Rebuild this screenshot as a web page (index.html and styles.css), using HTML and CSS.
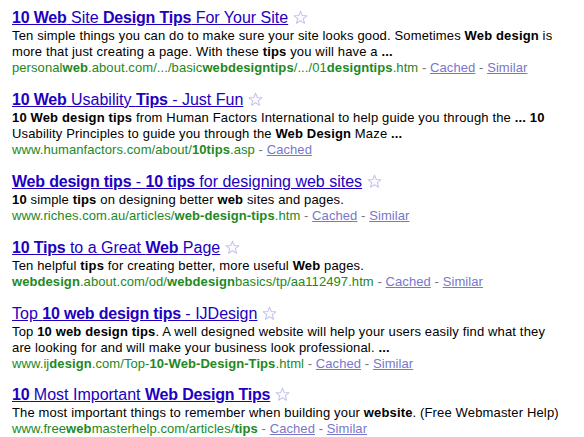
FILE: index.html
```html
<!DOCTYPE html>
<html>
<head>
<meta charset="utf-8">
<link rel="stylesheet" href="styles.css">
</head>
<body>
<ol class="results">
  <li class="result">
    <h3 class="title"><a href="#"><b>10 Web</b> Site <b>Design Tips</b> For Your Site</a><svg class="star" viewBox="0 0 16 16"><path d="M8 1.2 L9.9 5.9 L14.8 6.2 L11 9.3 L12.3 14.2 L8 11.5 L3.7 14.2 L5 9.3 L1.2 6.2 L6.1 5.9 Z"/></svg></h3>
    <div class="snippet">Ten simple things you can do to make sure your site looks good. Sometimes <b>Web design</b> is<br>more that just creating a page. With these <b>tips</b> you will have a <b>...</b></div>
    <div class="meta"><cite>personal<b>web</b>.about.com/.../basic<b>webdesigntips</b>/.../01<b>designtips</b>.htm</cite> - <a href="#">Cached</a> - <a href="#">Similar</a></div>
  </li>
  <li class="result">
    <h3 class="title"><a href="#"><b>10 Web</b> Usability <b>Tips</b> - Just Fun</a><svg class="star" viewBox="0 0 16 16"><path d="M8 1.2 L9.9 5.9 L14.8 6.2 L11 9.3 L12.3 14.2 L8 11.5 L3.7 14.2 L5 9.3 L1.2 6.2 L6.1 5.9 Z"/></svg></h3>
    <div class="snippet"><b>10 Web design tips</b> from Human Factors International to help guide you through the <b>... 10</b><br>Usability Principles to guide you through the <b>Web Design</b> Maze <b>...</b></div>
    <div class="meta"><cite>www.humanfactors.com/about/<b>10tips</b>.asp</cite> - <a href="#">Cached</a></div>
  </li>
  <li class="result">
    <h3 class="title"><a href="#"><b>Web design tips</b> - <b>10 tips</b> for designing web sites</a><svg class="star" viewBox="0 0 16 16"><path d="M8 1.2 L9.9 5.9 L14.8 6.2 L11 9.3 L12.3 14.2 L8 11.5 L3.7 14.2 L5 9.3 L1.2 6.2 L6.1 5.9 Z"/></svg></h3>
    <div class="snippet"><b>10</b> simple <b>tips</b> on designing better <b>web</b> sites and pages.</div>
    <div class="meta"><cite>www.riches.com.au/articles/<b>web-design-tips</b>.htm</cite> - <a href="#">Cached</a> - <a href="#">Similar</a></div>
  </li>
  <li class="result">
    <h3 class="title"><a href="#"><b>10 Tips</b> to a Great <b>Web</b> Page</a><svg class="star" viewBox="0 0 16 16"><path d="M8 1.2 L9.9 5.9 L14.8 6.2 L11 9.3 L12.3 14.2 L8 11.5 L3.7 14.2 L5 9.3 L1.2 6.2 L6.1 5.9 Z"/></svg></h3>
    <div class="snippet">Ten helpful <b>tips</b> for creating better, more useful <b>Web</b> pages.</div>
    <div class="meta"><cite><b>webdesign</b>.about.com/od/<b>webdesign</b>basics/tp/aa112497.htm</cite> - <a href="#">Cached</a> - <a href="#">Similar</a></div>
  </li>
  <li class="result">
    <h3 class="title"><a href="#">Top <b>10 web design tips</b> - IJDesign</a><svg class="star" viewBox="0 0 16 16"><path d="M8 1.2 L9.9 5.9 L14.8 6.2 L11 9.3 L12.3 14.2 L8 11.5 L3.7 14.2 L5 9.3 L1.2 6.2 L6.1 5.9 Z"/></svg></h3>
    <div class="snippet">Top <b>10 web design tips</b>. A well designed website will help your users easily find what they<br>are looking for and will make your business look professional. <b>...</b></div>
    <div class="meta"><cite>www.ij<b>design</b>.com/Top-<b>10-Web-Design-Tips</b>.html</cite> - <a href="#">Cached</a> - <a href="#">Similar</a></div>
  </li>
  <li class="result">
    <h3 class="title"><a href="#"><b>10</b> Most Important <b>Web Design Tips</b></a><svg class="star" viewBox="0 0 16 16"><path d="M8 1.2 L9.9 5.9 L14.8 6.2 L11 9.3 L12.3 14.2 L8 11.5 L3.7 14.2 L5 9.3 L1.2 6.2 L6.1 5.9 Z"/></svg></h3>
    <div class="snippet">The most important things to remember when building your <b>website</b>. (Free Webmaster Help)</div>
    <div class="meta"><cite>www.free<b>web</b>masterhelp.com/articles/<b>tips</b></cite> - <a href="#">Cached</a> - <a href="#">Similar</a></div>
  </li>
</ol>
</body>
</html>
```

FILE: styles.css
```css
html, body {
  margin: 0;
  padding: 0;
  background: #fff;
}
body {
  font-family: "Liberation Sans", Arial, sans-serif;
  color: #000;
}
.results {
  list-style: none;
  margin: 0;
  padding: 8px 0 0 12px;
}
.result {
  margin: 0 0 14px 0;
}
.result:nth-child(n+5) {
  margin-bottom: 13px;
}
.title {
  margin: 0;
  font-size: 16px;
  font-weight: normal;
  line-height: 20px;
  height: 20px;
  white-space: nowrap;
  display: flex;
  align-items: center;
}
.title a {
  color: #2200c1;
  text-decoration: underline;
}
.title b {
  letter-spacing: -0.2px;
}
.star {
  width: 15px;
  height: 15px;
  margin-left: 5px;
  margin-top: -2px;
  fill: #fbfbff;
  stroke: #c4c4ec;
  stroke-width: 1.1;
  stroke-linejoin: round;
}
.snippet, .meta {
  font-size: 13px;
  line-height: 16px;
  white-space: nowrap;
}
.snippet {
  letter-spacing: 0.15px;
}
.meta {
  color: #777;
  letter-spacing: 0.08px;
}
.meta cite {
  font-style: normal;
  color: #228822;
}
.meta a {
  color: #7777cc;
  text-decoration: underline;
}
```
